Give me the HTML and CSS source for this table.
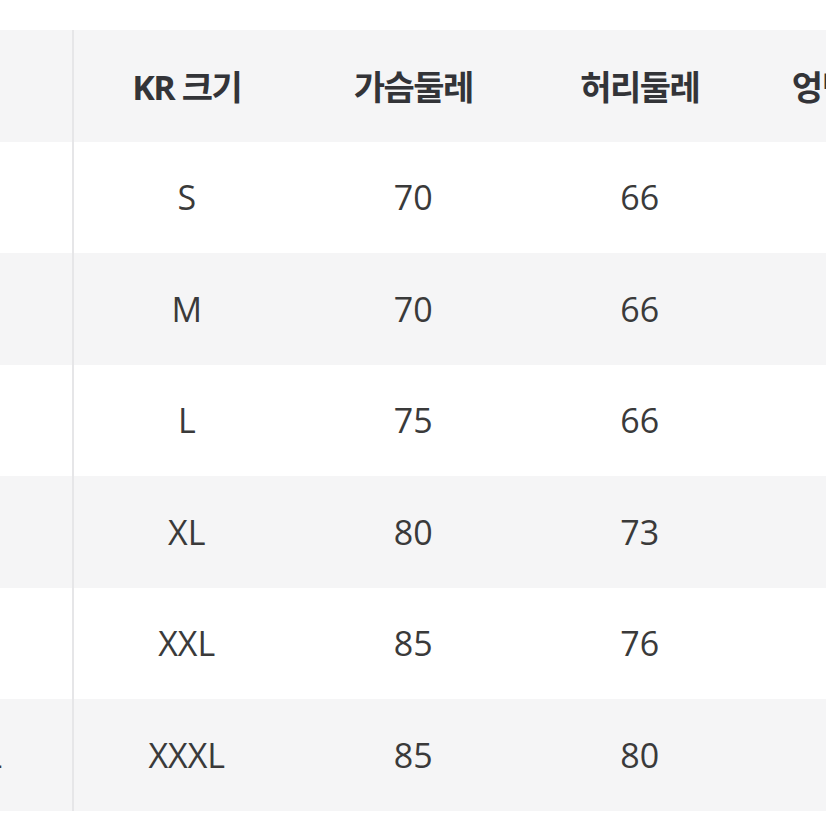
FILE: index.html
```html
<!DOCTYPE html>
<html lang="ko">
<head>
<meta charset="utf-8">
<link rel="stylesheet" href="styles.css">
</head>
<body>
<table class="size-table">
  <thead>
    <tr>
      <th class="first"></th>
      <th>KR 크기</th>
      <th>가슴둘레</th>
      <th>허리둘레</th>
      <th>엉덩이둘레</th>
    </tr>
  </thead>
  <tbody>
    <tr><td class="first"></td><td>S</td><td>70</td><td>66</td><td></td></tr>
    <tr class="alt"><td class="first"></td><td>M</td><td>70</td><td>66</td><td></td></tr>
    <tr><td class="first"></td><td>L</td><td>75</td><td>66</td><td></td></tr>
    <tr class="alt"><td class="first"></td><td>XL</td><td>80</td><td>73</td><td></td></tr>
    <tr><td class="first"></td><td>XXL</td><td>85</td><td>76</td><td></td></tr>
    <tr class="alt"><td class="first"><span class="tail">XXXL</span></td><td>XXXL</td><td>85</td><td>80</td><td></td></tr>
  </tbody>
</table>
</body>
</html>
```

FILE: styles.css
```css
html, body {
  margin: 0;
  padding: 0;
  background: #ffffff;
  overflow: hidden;
  width: 826px;
  height: 826px;
}

body {
  padding-top: 30px;
  box-sizing: border-box;
  font-family: "Open Sans", "Noto Sans CJK KR", sans-serif;
  color: #333333;
}

.size-table {
  border-collapse: separate;
  border-spacing: 0;
  margin-left: -150px;
  table-layout: fixed;
  width: 1128px;
}

.size-table th,
.size-table td {
  width: 225.5px;
  height: 111.5px;
  padding: 0 1px 0 0;
  text-align: center;
  vertical-align: middle;
  font-size: 34px;
  white-space: nowrap;
  overflow: hidden;
}

.size-table th {
  background: #f5f5f6;
  font-weight: 700;
  color: #333438;
  letter-spacing: -1.5px;
}

.size-table td {
  font-weight: 400;
  color: #3a3a3a;
}

.size-table tr.alt td {
  background: #f5f5f6;
}

.size-table .first {
  width: 224px;
  border-right: 2px solid #e6e6e8;
  text-align: right;
  padding-right: 70px;
  box-sizing: border-box;
}

.tail {
  display: inline-block;
}
```
